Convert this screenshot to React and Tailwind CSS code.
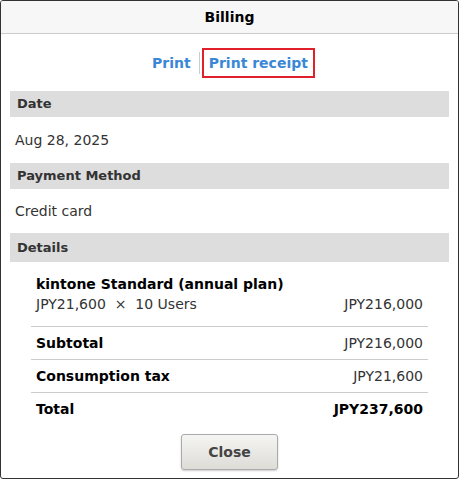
export default function App() {
  const f = { fontFamily: '"DejaVu Sans", Verdana, sans-serif' };
  return (
    <div style={f} className="w-[459px] h-[480px] bg-white text-[14px] text-[#333]">
      <div className="h-[479px] border border-[#333] rounded-[3px] overflow-hidden flex flex-col">
        <div className="h-[33px] bg-[#f7f7f7] border-b border-[#ccc] flex items-center justify-center text-[14px] font-bold text-black">Billing</div>
        <div className="flex justify-center items-center h-[57px] pt-[1px]">
          <span className="text-[#3a87d6] font-bold text-[14px] px-[8px]">Print</span>
          <span className="w-px h-[22px] bg-[#ccc]"></span>
          <span className="text-[#3a87d6] font-bold text-[14px] px-[5px] h-[30px] flex items-center border-2 border-[#e0202a] ml-[2px]">Print receipt</span>
        </div>
        <div className="mx-[9px] h-[26px] bg-[#dddddd] font-bold flex items-center px-[7px] text-[13px]">Date</div>
        <div className="h-[46px] flex items-center px-[14px]">Aug 28, 2025</div>
        <div className="mx-[9px] h-[26px] bg-[#dddddd] font-bold flex items-center px-[7px] text-[13px]">Payment Method</div>
        <div className="h-[44px] flex items-center px-[14px]">Credit card</div>
        <div className="mx-[9px] h-[29px] bg-[#dddddd] font-bold flex items-center px-[7px] text-[13px]">Details</div>
        <div className="mx-[30px] mt-[12px]">
          <div className="px-[5px] pb-[12px] border-b border-[#ccc]">
            <div className="font-bold text-black leading-[20px]">kintone Standard (annual plan)</div>
            <div className="flex justify-between leading-[20px]"><span>JPY21,600 &nbsp;×&nbsp; 10 Users</span><span>JPY216,000</span></div>
          </div>
          <div className="px-[5px] h-[33px] flex justify-between items-center border-b border-[#ccc]"><span className="font-bold text-black">Subtotal</span><span>JPY216,000</span></div>
          <div className="px-[5px] h-[33px] flex justify-between items-center border-b border-[#ccc]"><span className="font-bold text-black">Consumption tax</span><span>JPY21,600</span></div>
          <div className="px-[5px] h-[33px] flex justify-between items-center"><span className="font-bold text-black">Total</span><span className="font-bold text-black">JPY237,600</span></div>
        </div>
        <div className="flex justify-center mt-[8px]">
          <button className="w-[97px] h-[36px] rounded-[3px] border border-[#aaa] bg-gradient-to-b from-[#f5f5f3] to-[#dddcd7] text-[#444] font-bold text-[14px] shadow-[0_1px_2px_rgba(0,0,0,0.2)]">Close</button>
        </div>
      </div>
    </div>
  );
}
